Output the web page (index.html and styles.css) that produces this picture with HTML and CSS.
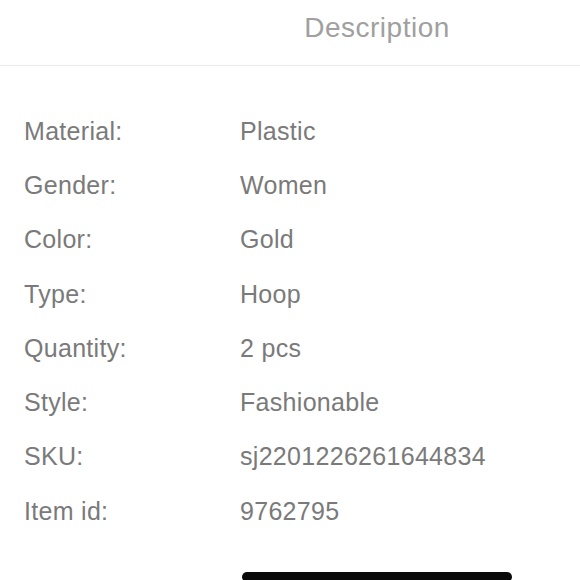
FILE: index.html
```html
<!DOCTYPE html>
<html>
<head>
<meta charset="utf-8">
<link rel="stylesheet" href="styles.css">
</head>
<body>
<div class="page">
  <header class="header"><h1 class="title">Description</h1></header>
  <dl class="specs">
    <div class="row"><dt>Material:</dt><dd>Plastic</dd></div>
    <div class="row"><dt>Gender:</dt><dd>Women</dd></div>
    <div class="row"><dt>Color:</dt><dd>Gold</dd></div>
    <div class="row"><dt>Type:</dt><dd>Hoop</dd></div>
    <div class="row"><dt>Quantity:</dt><dd>2 pcs</dd></div>
    <div class="row"><dt>Style:</dt><dd>Fashionable</dd></div>
    <div class="row"><dt>SKU:</dt><dd>sj2201226261644834</dd></div>
    <div class="row"><dt>Item id:</dt><dd>9762795</dd></div>
  </dl>
  <div class="home-bar"></div>
</div>
</body>
</html>
```
FILE: styles.css
```css
html, body {
  margin: 0;
  padding: 0;
  background: #fff;
}
.page {
  width: 580px;
  height: 580px;
  overflow: hidden;
  position: relative;
  font-family: "Liberation Sans", Arial, sans-serif;
}
.header {
  height: 66px;
  border-bottom: 1px solid #ececec;
  display: flex;
  align-items: center;
  justify-content: center;
  padding-left: 174px;
  box-sizing: border-box;
}
.title {
  margin: 0;
  font-size: 28px;
  font-weight: normal;
  color: #a0a0a0;
  letter-spacing: 0.5px;
  padding-bottom: 10px;
}
.specs {
  margin: 0;
  padding: 38px 0 0 24px;
}
.row {
  display: grid;
  grid-template-columns: 216px 1fr;
  height: 54.3px;
  align-items: center;
  font-size: 25px;
  color: #7a7a7a;
}
.row dt, .row dd {
  margin: 0;
  letter-spacing: 0.3px;
}
.home-bar {
  position: absolute;
  left: 242px;
  top: 572px;
  width: 270px;
  height: 10px;
  border-radius: 5px;
  background: #0a0a0a;
}
```
